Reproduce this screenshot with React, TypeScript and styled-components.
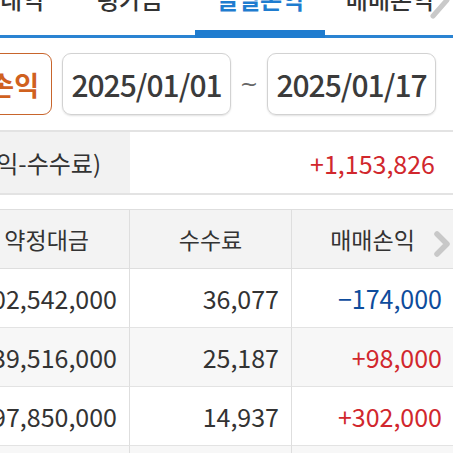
import React from "react";
import styled, { createGlobalStyle, css } from "styled-components";

const Global = createGlobalStyle`
  html, body { margin: 0; padding: 0; background: #fff; }
  body {
    font-family: "Noto Sans CJK KR", "Noto Sans", sans-serif;
    color: #333;
    overflow: hidden;
  }
`;

const Screen = styled.div`
  width: 453px;
  height: 453px;
  overflow: hidden;
  position: relative;
  background: #fff;
`;

const TabBar = styled.div`
  position: relative;
  height: 35px;
  border-bottom: 3px solid #2a83d2;
  overflow: visible;
`;

const TabStrip = styled.div`
  display: flex;
  margin-left: -65px;
  height: 35px;
`;

const Tab = styled.div<{ $active?: boolean }>`
  position: relative;
  flex: none;
  width: 130px;
  height: 35px;
  display: flex;
  justify-content: center;
  align-items: flex-start;
  ${(p) =>
    p.$active &&
    css`
      &::after {
        content: "";
        position: absolute;
        left: 0;
        right: 0;
        top: 30px;
        height: 8px;
        background: #1f7ccf;
      }
    `}
`;

const TabLabel = styled.span<{ $active?: boolean }>`
  font-size: 24px;
  line-height: 24px;
  margin-top: -13px;
  white-space: nowrap;
  font-weight: ${(p) => (p.$active ? 700 : 500)};
  color: ${(p) => (p.$active ? "#1f7ccf" : "#333")};
`;

const ScrollArrow = styled.svg`
  position: absolute;
  right: 0;
  top: -20px;
`;

const DateRow = styled.div`
  display: flex;
  align-items: center;
  gap: 10px;
  padding: 15px 17px 15px 0;
`;

const PeriodButton = styled.div`
  flex: none;
  width: 128px;
  height: 62px;
  margin-left: -76px;
  box-sizing: border-box;
  border: 1.5px solid #c8652c;
  border-radius: 9px;
  display: flex;
  align-items: center;
  justify-content: flex-end;
  padding-right: 12px;
  color: #d0611f;
  font-size: 27px;
  font-weight: 700;
  white-space: nowrap;
`;

const DateBox = styled.div`
  flex: none;
  width: 169px;
  height: 62px;
  box-sizing: border-box;
  border: 1px solid #d2d2d2;
  border-radius: 9px;
  box-shadow: 0 1px 2px rgba(0, 0, 0, 0.12);
  display: flex;
  align-items: center;
  justify-content: center;
  font-size: 30px;
  font-weight: 500;
  letter-spacing: -1px;
  color: #3b3b3b;
`;

const Tilde = styled.span`
  flex: none;
  width: 16px;
  display: flex;
  justify-content: center;
  font-family: "DejaVu Sans", sans-serif;
  font-size: 22px;
  line-height: 22px;
  color: #666;
`;

const SummaryRow = styled.div`
  display: flex;
  height: 61px;
  border-top: 2px solid #e3e3e3;
  border-bottom: 2px solid #e3e3e3;
`;

const SummaryLabel = styled.div`
  flex: none;
  width: 130px;
  background: #f2f2f2;
  display: flex;
  align-items: center;
  justify-content: flex-end;
  padding-right: 29px;
  box-sizing: border-box;
  overflow: hidden;
  white-space: nowrap;
  font-size: 24px;
  color: #333;
`;

const SummaryValue = styled.div`
  flex: 1;
  display: flex;
  align-items: center;
  justify-content: flex-end;
  padding-right: 18px;
  font-size: 25px;
  color: #d1272d;
`;

const Table = styled.div`
  margin-top: 14px;
  display: grid;
  grid-template-columns: 130px 162px 161px;
  border-top: 1px solid #dedede;
`;

const HeadCell = styled.div<{ $last?: boolean }>`
  position: relative;
  height: 58px;
  background: #f3f3f3;
  border-bottom: 1px solid #dedede;
  border-right: ${(p) => (p.$last ? "none" : "1px solid #dedede")};
  display: flex;
  align-items: center;
  justify-content: center;
  font-size: 23px;
  color: #333;
  white-space: nowrap;
  overflow: hidden;
`;

const FirstHead = styled(HeadCell)`
  justify-content: flex-end;
  padding-right: 40px;
`;

const Chevron = styled.svg`
  position: absolute;
  right: 1px;
  top: 20px;
`;

const Cell = styled.div<{ $alt?: boolean; $last?: boolean; $tone?: "up" | "down" }>`
  height: 58px;
  background: ${(p) => (p.$alt ? "#f7f7f7" : "#fff")};
  border-bottom: 1px solid #e3e3e3;
  border-right: ${(p) => (p.$last ? "none" : "1px solid #dedede")};
  display: flex;
  align-items: center;
  justify-content: flex-end;
  padding-right: ${(p) => (p.$last ? "11px" : "12px")};
  font-size: 25px;
  white-space: nowrap;
  overflow: hidden;
  color: ${(p) => (p.$tone === "up" ? "#d1272d" : p.$tone === "down" ? "#0e4c9c" : "#333")};
`;

const rows: { amount: string; fee: string; pl: string; tone: "up" | "down" }[] = [
  { amount: "102,542,000", fee: "36,077", pl: "−174,000", tone: "down" },
  { amount: "139,516,000", fee: "25,187", pl: "+98,000", tone: "up" },
  { amount: "197,850,000", fee: "14,937", pl: "+302,000", tone: "up" },
  { amount: "", fee: "", pl: "", tone: "up" },
];

export default function App() {
  return (
    <Screen>
      <Global />
      <TabBar>
        <TabStrip>
          <Tab><TabLabel>체결내역</TabLabel></Tab>
          <Tab><TabLabel>평가금</TabLabel></Tab>
          <Tab $active><TabLabel $active>일별손익</TabLabel></Tab>
          <Tab><TabLabel>매매손익</TabLabel></Tab>
        </TabStrip>
        <ScrollArrow width="26" height="40" viewBox="0 0 26 40">
          <path d="M6 4 L20 20 L6 36" fill="none" stroke="#c9c9c9" strokeWidth="5" strokeLinecap="round" strokeLinejoin="round" />
        </ScrollArrow>
      </TabBar>
      <DateRow>
        <PeriodButton>기간손익</PeriodButton>
        <DateBox>2025/01/01</DateBox>
        <Tilde>~</Tilde>
        <DateBox>2025/01/17</DateBox>
      </DateRow>
      <SummaryRow>
        <SummaryLabel>총손익(매매손익-수수료)</SummaryLabel>
        <SummaryValue>+1,153,826</SummaryValue>
      </SummaryRow>
      <Table>
        <FirstHead>약정대금</FirstHead>
        <HeadCell>수수료</HeadCell>
        <HeadCell $last>
          매매손익
          <Chevron width="20" height="28" viewBox="0 0 20 28">
            <path d="M5 4 L15 14 L5 24" fill="none" stroke="#c8c8c8" strokeWidth="5.5" strokeLinecap="round" strokeLinejoin="round" />
          </Chevron>
        </HeadCell>
        {rows.map((r, i) => (
          <React.Fragment key={i}>
            <Cell $alt={i % 2 === 1}>{r.amount}</Cell>
            <Cell $alt={i % 2 === 1}>{r.fee}</Cell>
            <Cell $alt={i % 2 === 1} $last $tone={r.tone}>{r.pl}</Cell>
          </React.Fragment>
        ))}
      </Table>
    </Screen>
  );
}
